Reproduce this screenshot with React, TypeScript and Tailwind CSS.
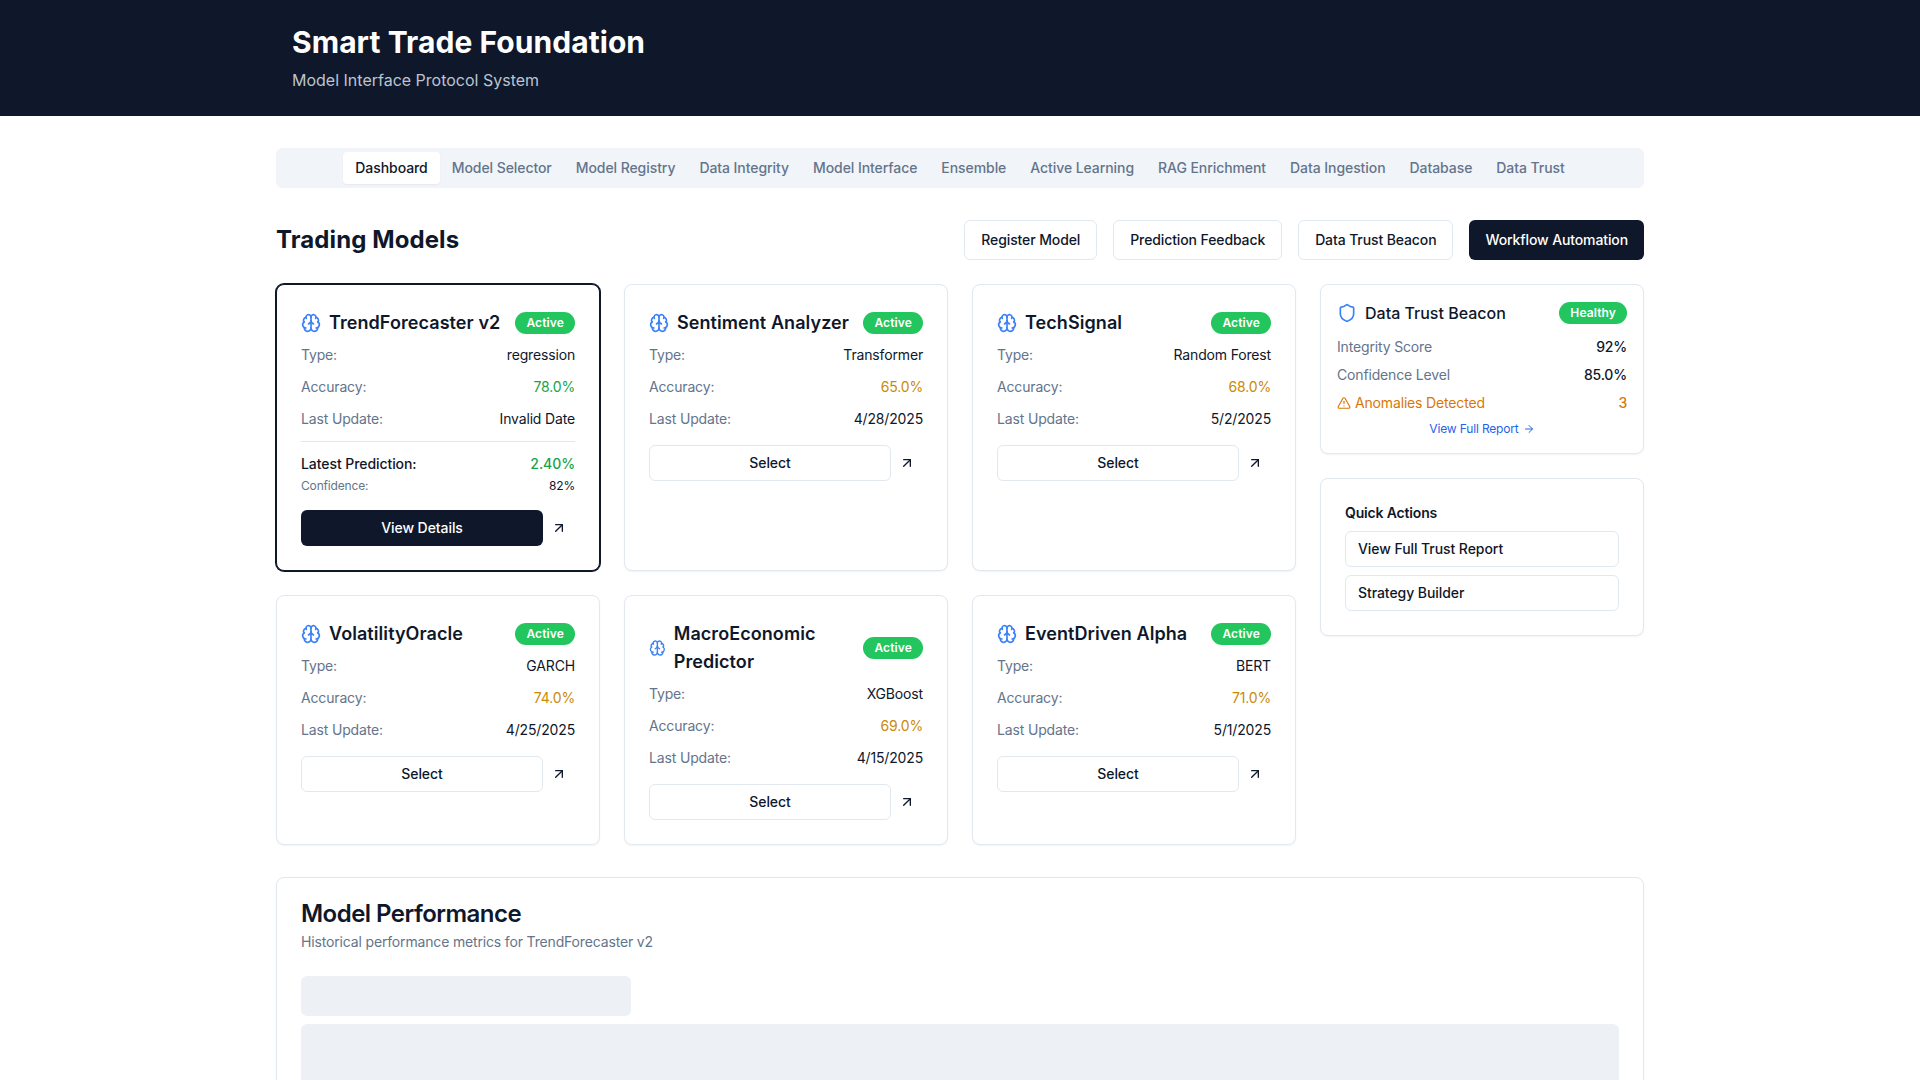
import { Brain, ArrowUpRight, Shield, TriangleAlert, ArrowRight } from "lucide-react";

const tabs = ["Dashboard","Model Selector","Model Registry","Data Integrity","Model Interface","Ensemble","Active Learning","RAG Enrichment","Data Ingestion","Database","Data Trust"];

type M = { name: string; type: string; acc: string; color: string; date: string; selected?: boolean };
const models: M[] = [
  { name: "TrendForecaster v2", type: "regression", acc: "78.0%", color: "text-[#16a34a]", date: "Invalid Date", selected: true },
  { name: "Sentiment Analyzer", type: "Transformer", acc: "65.0%", color: "text-[#ca8a04]", date: "4/28/2025" },
  { name: "TechSignal", type: "Random Forest", acc: "68.0%", color: "text-[#ca8a04]", date: "5/2/2025" },
  { name: "VolatilityOracle", type: "GARCH", acc: "74.0%", color: "text-[#ca8a04]", date: "4/25/2025" },
  { name: "MacroEconomic Predictor", type: "XGBoost", acc: "69.0%", color: "text-[#ca8a04]", date: "4/15/2025" },
  { name: "EventDriven Alpha", type: "BERT", acc: "71.0%", color: "text-[#ca8a04]", date: "5/1/2025" },
];

function Row({ label, value, cls = "text-[#0f172a]" }: { label: string; value: string; cls?: string }) {
  return (
    <div className="flex justify-between text-sm">
      <span className="text-[#64748b]">{label}</span>
      <span className={cls}>{value}</span>
    </div>
  );
}

function Badge({ children }: { children: string }) {
  return <span className="rounded-full border border-transparent bg-[#22c55e] px-2.5 py-0.5 text-xs font-semibold tracking-[0.01em] text-white">{children}</span>;
}

function ModelCard({ m }: { m: M }) {
  return (
    <div className={m.selected ? "rounded-lg border border-[#0f172a] ring-1 ring-[#0f172a] bg-white p-6 shadow-xs" : "rounded-lg border border-[#e2e8f0] bg-white p-6 shadow-xs"}>
      <div className="flex items-center justify-between mb-2">
        <div className="flex items-center text-lg font-semibold tracking-[0.004em] text-[#0f172a]">
          <Brain className="mr-2 h-5 w-5 text-[#3b82f6]" />
          <span>{m.name}</span>
        </div>
        <Badge>Active</Badge>
      </div>
      <div className="flex flex-col gap-3">
        <Row label="Type:" value={m.type} />
        <Row label="Accuracy:" value={m.acc} cls={m.color} />
        <Row label="Last Update:" value={m.date} />
      </div>
      {m.selected && (
        <div className="mt-3 border-t border-[#e2e8f0] pt-3">
          <div className="flex justify-between text-sm">
            <span className="font-medium tracking-[-0.005em] text-[#0f172a]">Latest Prediction:</span>
            <span className="font-medium tracking-[-0.005em] text-[#16a34a]">2.40%</span>
          </div>
          <div className="mt-1 flex justify-between text-xs">
            <span className="text-[#64748b]">Confidence:</span>
            <span className="text-[#0f172a]">82%</span>
          </div>
        </div>
      )}
      <div className="mt-4 flex">
        <button className={m.selected ? "h-9 flex-1 rounded-md bg-[#0f172a] text-sm font-medium tracking-[-0.005em] text-white" : "h-9 flex-1 rounded-md border border-[#e2e8f0] bg-white text-sm font-medium tracking-[-0.005em] text-[#0f172a]"}>
          {m.selected ? "View Details" : "Select"}
        </button>
        <button className="flex h-9 w-8 items-center justify-center text-[#0f172a]">
          <ArrowUpRight className="h-4 w-4" />
        </button>
      </div>
    </div>
  );
}

export default function App() {
  return (
    <div className="min-h-screen bg-white text-[#0f172a] font-['Inter',sans-serif] tracking-[-0.01em]">
      <header className="bg-[#0f172a] text-white">
        <div className="mx-auto max-w-[1400px] px-8 py-6">
          <h1 className="text-3xl font-bold tracking-[0.002em]">Smart Trade Foundation</h1>
          <p className="mt-2 text-base tracking-normal text-[#bcc4cf]">Model Interface Protocol System</p>
        </div>
      </header>
      <main className="mx-auto max-w-[1400px] px-4 py-8">
        <nav className="mb-8 flex h-10 items-center justify-center rounded-md bg-[#f1f5f9] p-1">
          {tabs.map((t, i) => (
            <button key={t} className={i === 0 ? "rounded-sm bg-white px-3 py-1.5 text-sm font-medium tracking-[-0.005em] text-[#0f172a] shadow-xs" : "rounded-sm px-3 py-1.5 text-sm font-medium tracking-[-0.005em] text-[#64748b]"}>{t}</button>
          ))}
        </nav>
        <div className="mb-6 flex items-center justify-between">
          <h2 className="text-2xl font-bold tracking-[0.004em]">Trading Models</h2>
          <div className="flex gap-4">
            {["Register Model","Prediction Feedback","Data Trust Beacon"].map((b) => (
              <button key={b} className="h-10 rounded-md border border-[#e2e8f0] bg-white px-4 text-sm font-medium tracking-[-0.008em] text-[#0f172a]">{b}</button>
            ))}
            <button className="h-10 rounded-md bg-[#0f172a] px-4 text-sm font-medium tracking-[-0.008em] text-white">Workflow Automation</button>
          </div>
        </div>
        <div className="mb-8 grid grid-cols-4 gap-6">
          <div className="col-span-3 grid grid-cols-3 gap-6">
            {models.map((m) => <ModelCard key={m.name} m={m} />)}
          </div>
          <div className="flex flex-col gap-6">
            <div className="rounded-lg border border-[#e2e8f0] bg-white p-4 shadow-xs">
              <div className="mb-3 flex items-center justify-between">
                <div className="flex items-center font-medium tracking-normal">
                  <Shield className="mr-2 h-5 w-5 text-[#3b82f6]" />
                  <span>Data Trust Beacon</span>
                </div>
                <Badge>Healthy</Badge>
              </div>
              <div className="flex flex-col gap-2">
                <div className="flex justify-between text-sm">
                  <span className="text-[#64748b]">Integrity Score</span>
                  <span className="font-medium">92%</span>
                </div>
                <div className="flex justify-between text-sm">
                  <span className="text-[#64748b]">Confidence Level</span>
                  <span className="font-medium">85.0%</span>
                </div>
                <div className="flex justify-between text-sm text-[#d97706]">
                  <span className="flex items-center"><TriangleAlert className="mr-1 h-3.5 w-3.5" />Anomalies Detected</span>
                  <span className="font-medium">3</span>
                </div>
              </div>
              <div className="mt-2 flex items-center justify-center text-xs text-[#2563eb]">
                View Full Report <ArrowRight className="ml-1 h-3 w-3" />
              </div>
            </div>
            <div className="rounded-lg border border-[#e2e8f0] bg-white p-6 shadow-xs">
              <h3 className="mb-2 text-sm font-semibold">Quick Actions</h3>
              <div className="flex flex-col gap-2">
                <button className="h-9 rounded-md border border-[#e2e8f0] bg-white px-3 text-left text-sm font-medium tracking-[-0.005em]">View Full Trust Report</button>
                <button className="h-9 rounded-md border border-[#e2e8f0] bg-white px-3 text-left text-sm font-medium tracking-[-0.005em]">Strategy Builder</button>
              </div>
            </div>
          </div>
        </div>
        <section className="rounded-lg border border-[#e2e8f0] bg-white p-6 shadow-xs">
          <h2 className="text-2xl font-semibold leading-none tracking-[-0.022em]">Model Performance</h2>
          <p className="mt-1.5 text-sm text-[#64748b]">Historical performance metrics for TrendForecaster v2</p>
          <div className="mt-6 h-10 w-[330px] rounded-md bg-[#edf0f5]" />
          <div className="mt-2 h-[300px] rounded-md bg-[#edf0f5]" />
        </section>
      </main>
    </div>
  );
}
